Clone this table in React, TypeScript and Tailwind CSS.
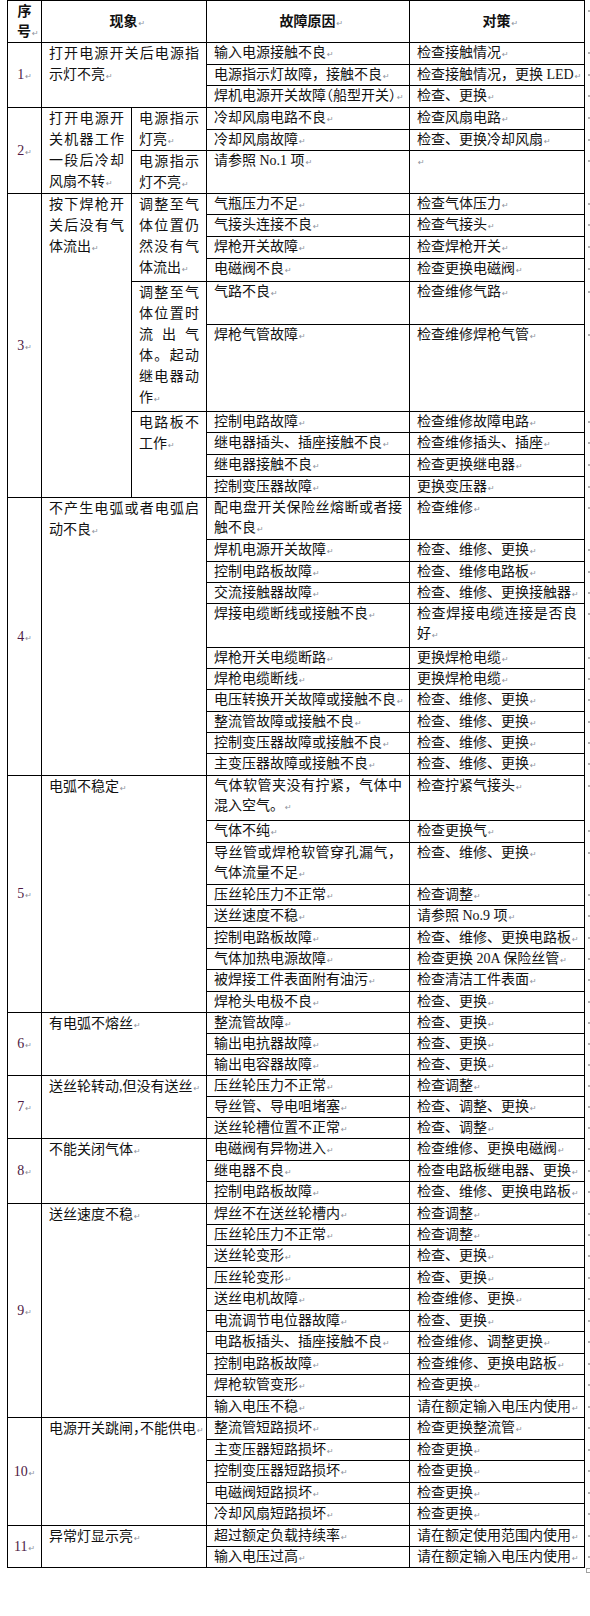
import React from 'react';

type Row = [string, string, number];
type Split = { t: string; n: number };
type Grp = { no: string; wide?: string; left?: string; split?: Split[]; rows: Row[] };

const groups: Grp[] = [
  {
    no: '1',
    wide: '打开电源开关后电源指示灯不亮',
    rows: [
      ['输入电源接触不良', '检查接触情况', 22],
      ['电源指示灯故障，接触不良', '检查接触情况，更换 LED', 21],
      ['焊机电源开关故障（船型开关）', '检查、更换', 22],
    ],
  },
  {
    no: '2',
    left: '打开电源开关机器工作一段后冷却风扇不转',
    split: [
      { t: '电源指示灯亮', n: 2 },
      { t: '电源指示灯不亮', n: 1 },
    ],
    rows: [
      ['冷却风扇电路不良', '检查风扇电路', 22],
      ['冷却风扇故障', '检查、更换冷却风扇', 21],
      ['请参照 No.1 项', '', 43],
    ],
  },
  {
    no: '3',
    left: '按下焊枪开关后没有气体流出',
    split: [
      { t: '调整至气体位置仍然没有气体流出', n: 4 },
      { t: '调整至气体位置时流出气体。起动继电器动作', n: 2 },
      { t: '电路板不工作', n: 4 },
    ],
    rows: [
      ['气瓶压力不足', '检查气体压力', 21],
      ['气接头连接不良', '检查气接头', 22],
      ['焊枪开关故障', '检查焊枪开关', 22],
      ['电磁阀不良', '检查更换电磁阀', 23],
      ['气路不良', '检查维修气路', 43],
      ['焊枪气管故障', '检查维修焊枪气管', 87],
      ['控制电路故障', '检查维修故障电路', 21],
      ['继电器插头、插座接触不良', '检查维修插头、插座', 22],
      ['继电器接触不良', '检查更换继电器', 22],
      ['控制变压器故障', '更换变压器', 21],
    ],
  },
  {
    no: '4',
    wide: '不产生电弧或者电弧启动不良',
    rows: [
      ['配电盘开关保险丝熔断或者接触不良', '检查维修', 42],
      ['焊机电源开关故障', '检查、维修、更换', 22],
      ['控制电路板故障', '检查、维修电路板', 21],
      ['交流接触器故障', '检查、维修、更换接触器', 21],
      ['焊接电缆断线或接触不良', '检查焊接电缆连接是否良好', 44],
      ['焊枪开关电缆断路', '更换焊枪电缆', 21],
      ['焊枪电缆断线', '更换焊枪电缆', 21],
      ['电压转换开关故障或接触不良', '检查、维修、更换', 22],
      ['整流管故障或接触不良', '检查、维修、更换', 21],
      ['控制变压器故障或接触不良', '检查、维修、更换', 21],
      ['主变压器故障或接触不良', '检查、维修、更换', 22],
    ],
  },
  {
    no: '5',
    wide: '电弧不稳定',
    rows: [
      ['气体软管夹没有拧紧，气体中混入空气。', '检查拧紧气接头', 45],
      ['气体不纯', '检查更换气', 22],
      ['导丝管或焊枪软管穿孔漏气，气体流量不足', '检查、维修、更换', 42],
      ['压丝轮压力不正常', '检查调整', 21],
      ['送丝速度不稳', '请参照 No.9 项', 22],
      ['控制电路板故障', '检查、维修、更换电路板', 21],
      ['气体加热电源故障', '检查更换 20A 保险丝管', 21],
      ['被焊接工件表面附有油污', '检查清洁工件表面', 22],
      ['焊枪头电极不良', '检查、更换', 21],
    ],
  },
  {
    no: '6',
    wide: '有电弧不熔丝',
    rows: [
      ['整流管故障', '检查、更换', 21],
      ['输出电抗器故障', '检查、更换', 21],
      ['输出电容器故障', '检查、更换', 21],
    ],
  },
  {
    no: '7',
    wide: '送丝轮转动,但没有送丝',
    rows: [
      ['压丝轮压力不正常', '检查调整', 21],
      ['导丝管、导电咀堵塞', '检查、调整、更换', 21],
      ['送丝轮槽位置不正常', '检查、调整', 21],
    ],
  },
  {
    no: '8',
    wide: '不能关闭气体',
    rows: [
      ['电磁阀有异物进入', '检查维修、更换电磁阀', 22],
      ['继电器不良', '检查电路板继电器、更换', 21],
      ['控制电路板故障', '检查、维修、更换电路板', 22],
    ],
  },
  {
    no: '9',
    wide: '送丝速度不稳',
    rows: [
      ['焊丝不在送丝轮槽内', '检查调整', 21],
      ['压丝轮压力不正常', '检查调整', 21],
      ['送丝轮变形', '检查、更换', 22],
      ['压丝轮变形', '检查、更换', 21],
      ['送丝电机故障', '检查维修、更换', 22],
      ['电流调节电位器故障', '检查、更换', 21],
      ['电路板插头、插座接触不良', '检查维修、调整更换', 22],
      ['控制电路板故障', '检查维修、更换电路板', 21],
      ['焊枪软管变形', '检查更换', 22],
      ['输入电压不稳', '请在额定输入电压内使用', 21],
    ],
  },
  {
    no: '10',
    wide: '电源开关跳闸，不能供电',
    rows: [
      ['整流管短路损坏', '检查更换整流管', 22],
      ['主变压器短路损坏', '检查更换', 21],
      ['控制变压器短路损坏', '检查更换', 22],
      ['电磁阀短路损坏', '检查更换', 21],
      ['冷却风扇短路损坏', '检查更换', 22],
    ],
  },
  {
    no: '11',
    wide: '异常灯显示亮',
    rows: [
      ['超过额定负载持续率', '请在额定使用范围内使用', 21],
      ['输入电压过高', '请在额定输入电压内使用', 21],
    ],
  },
];

const H: Record<number, string> = {
  21: 'h-[21px]',
  22: 'h-[22px]',
  23: 'h-[23px]',
  42: 'h-[42px]',
  43: 'h-[43px]',
  44: 'h-[44px]',
  45: 'h-[45px]',
  87: 'h-[87px]',
};

const NOWRAP = new Set(['焊机电源开关故障（船型开关）', '电源开关跳闸，不能供电']);

function Mark({ hang = true }: { hang?: boolean }) {
  return (
    <span
      className={
        (hang ? 'inline-block w-0 ' : 'inline-block ') +
        "whitespace-nowrap pl-[1px] align-baseline font-['DejaVu_Sans',sans-serif] text-[8px] font-normal leading-none text-[#8d929c]"
      }
    >
      ↵
    </span>
  );
}

function Marker() {
  return (
    <td className="w-[6px] border-0 p-0 align-top">
      <div className="ml-[3px] mt-[9px] h-[2px] w-[2px] bg-[#b0b0b0]" />
    </td>
  );
}

const cellBase = 'border border-black align-top px-[7px] py-0 text-justify';
const causeCls = cellBase + ' leading-[20px]';
const phenCls = cellBase + ' leading-[21px]';
const noCls =
  'border border-black align-middle px-0 py-0 text-center leading-[20px] text-[#4e1a44]';
const headCls = 'border border-black align-middle px-[7px] py-0 text-center font-bold leading-[20px]';

export default function App() {
  return (
    <div className="h-[1616px] w-[590px] bg-white pl-[7px] font-['Liberation_Serif','Noto_Sans_CJK_SC',serif] text-[14px] text-[#111]">
      <table className="w-[583px] table-fixed border-collapse">
        <colgroup>
          <col className="w-[34px]" />
          <col className="w-[90px]" />
          <col className="w-[75px]" />
          <col className="w-[203px]" />
          <col className="w-[175px]" />
          <col className="w-[6px]" />
        </colgroup>
        <tbody>
          <tr className="h-[42px]">
            <td className={headCls}>
              序号
              <Mark />
            </td>
            <td colSpan={2} className={headCls}>
              现象
              <Mark />
            </td>
            <td className={headCls}>
              故障原因
              <Mark />
            </td>
            <td className={headCls}>
              对策
              <Mark />
            </td>
            <Marker />
          </tr>
          {groups.map((g) => {
            const len = g.rows.length;
            const starts: Record<number, Split> = {};
            if (g.split) {
              let idx = 0;
              for (const s of g.split) {
                starts[idx] = s;
                idx += s.n;
              }
            }
            return g.rows.map((r, i) => {
              const sp = starts[i];
              return (
                <tr key={g.no + '-' + i} className={H[r[2]]}>
                  {i === 0 && (
                    <td rowSpan={len} className={noCls}>
                      {g.no}
                      <Mark hang={false} />
                    </td>
                  )}
                  {i === 0 && g.wide && (
                    <td
                      rowSpan={len}
                      colSpan={2}
                      className={
                        phenCls +
                        (NOWRAP.has(g.wide) ? " whitespace-nowrap [font-feature-settings:'halt']" : '')
                      }
                    >
                      {g.wide}
                      <Mark />
                    </td>
                  )}
                  {i === 0 && g.left && (
                    <td rowSpan={len} className={phenCls}>
                      {g.left}
                      <Mark />
                    </td>
                  )}
                  {sp && (
                    <td rowSpan={sp.n} className={phenCls}>
                      {sp.t}
                      <Mark />
                    </td>
                  )}
                  <td
                    className={
                      causeCls +
                      (NOWRAP.has(r[0]) ? " whitespace-nowrap [font-feature-settings:'halt']" : '')
                    }
                  >
                    {r[0]}
                    <Mark />
                  </td>
                  <td className={causeCls}>
                    {r[1]}
                    <Mark />
                  </td>
                  <Marker />
                </tr>
              );
            });
          })}
        </tbody>
      </table>
      <div className="ml-[579px] h-[5px] w-[5px] border border-[#a0a0a0]" />
    </div>
  );
}
